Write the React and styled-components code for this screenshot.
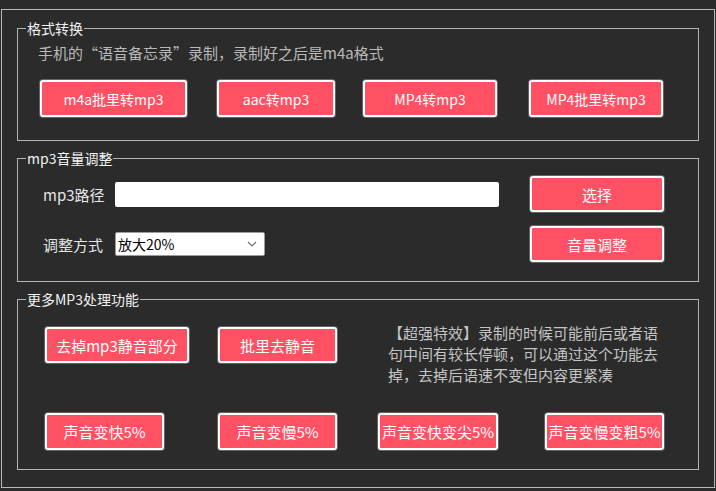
import React from "react";
import styled, { createGlobalStyle } from "styled-components";

const Global = createGlobalStyle`
  html, body { margin: 0; padding: 0; background: #2b2b2b; }
  body { font-family: "Noto Sans CJK SC", "Noto Sans", sans-serif; }
  * { box-sizing: border-box; }
`;

const Frame = styled.div`
  margin: 9px 0 0 1px;
  width: 714px;
  height: 479px;
  border: 1px solid #b9b9b9;
  padding: 10px 15px 0 15px;
  display: flex;
  flex-direction: column;
  gap: 9px;
`;

const Group = styled.fieldset`
  margin: 0;
  padding: 0;
  min-width: 0;
  border: 1px solid #b4b4b4;
  height: ${(p) => p.$h}px;
`;

const Legend = styled.legend`
  margin-left: 8px;
  padding: 0 1px;
  font-size: 14px;
  line-height: 16px;
  color: #f2f2f2;
`;

const Note = styled.div`
  margin: 7px 0 0 20px;
  font-size: 15px;
  line-height: 20px;
  color: #b9b9b9;
`;

const Btn = styled.button`
  width: ${(p) => p.$w}px;
  height: ${(p) => p.$h || 36}px;
  margin-top: ${(p) => p.$mt || 0}px;
  background: #ff5163;
  border: 2px solid #ffffff;
  border-radius: 3px;
  box-shadow: 0 0 0 1px rgba(200, 200, 200, 0.35);
  color: #ffffff;
  font-family: "Noto Sans CJK SC", "Noto Sans", sans-serif;
  font-size: ${(p) => p.$fs || 15}px;
  padding: 0;
  white-space: nowrap;
  cursor: pointer;
`;

const ConvertRow = styled.div`
  margin: 17px 0 0 22px;
  display: grid;
  grid-template-columns: 177px 146px 166px 134px;
  align-items: start;
`;

const VolumeGrid = styled.div`
  margin: 10px 0 0 25px;
  display: grid;
  grid-template-columns: 72px 415px 134px;
  grid-auto-rows: 36px;
  row-gap: 14px;
  align-items: center;
`;

const Label = styled.span`
  font-size: 15px;
  color: #e6e6e6;
  white-space: nowrap;
`;

const PathInput = styled.input`
  width: 384px;
  height: 25px;
  border: none;
  border-radius: 2px;
  background: #ffffff;
  outline: none;
`;

const Select = styled.div`
  width: 150px;
  height: 24px;
  background: #ffffff;
  border: 1px solid #9c9c9c;
  border-radius: 2px;
  display: flex;
  align-items: center;
  justify-content: space-between;
  padding: 0 7px 0 2px;
  font-size: 14px;
  color: #000;
`;

const MoreGrid = styled.div`
  margin: 15px 0 0 27px;
  display: grid;
  grid-template-columns: 173px 160px 167px 140px;
  row-gap: 28px;
  align-items: start;
`;

const Desc = styled.p`
  grid-column: 3 / span 2;
  margin: 0 0 0 10px;
  width: 275px;
  font-size: 15px;
  line-height: 21px;
  color: #c4c4c4;
`;

const Chevron = () => (
  <svg width="10" height="6" viewBox="0 0 10 6">
    <path d="M1 1 L5 5 L9 1" fill="none" stroke="#6f6f6f" strokeWidth="1.2" />
  </svg>
);

export default function App() {
  return (
    <>
      <Global />
      <Frame>
        <Group $h={121}>
          <Legend>格式转换</Legend>
          <Note>手机的“语音备忘录”录制，录制好之后是m4a格式</Note>
          <ConvertRow>
            <Btn $w={147} $h={37} $fs={14}>m4a批里转mp3</Btn>
            <Btn $w={118} $h={37} $fs={14}>aac转mp3</Btn>
            <Btn $w={134} $h={37} $fs={14}>MP4转mp3</Btn>
            <Btn $w={134} $h={37} $fs={14}>MP4批里转mp3</Btn>
          </ConvertRow>
        </Group>
        <Group $h={132}>
          <Legend>mp3音量调整</Legend>
          <VolumeGrid>
            <Label>mp3路径</Label>
            <PathInput />
            <Btn $w={134}>选择</Btn>
            <Label>调整方式</Label>
            <Select>
              <span>放大20%</span>
              <Chevron />
            </Select>
            <Btn $w={134}>音量调整</Btn>
          </VolumeGrid>
        </Group>
        <Group $h={179}>
          <Legend>更多MP3处理功能</Legend>
          <MoreGrid>
            <Btn $w={144} $mt={5}>去掉mp3静音部分</Btn>
            <Btn $w={119} $mt={5}>批里去静音</Btn>
            <Desc>【超强特效】录制的时候可能前后或者语句中间有较长停顿，可以通过这个功能去掉，去掉后语速不变但内容更紧凑</Desc>
            <Btn $w={119} $h={37}>声音变快5%</Btn>
            <Btn $w={119} $h={37}>声音变慢5%</Btn>
            <Btn $w={120} $h={37}>声音变快变尖5%</Btn>
            <Btn $w={119} $h={37}>声音变慢变粗5%</Btn>
          </MoreGrid>
        </Group>
      </Frame>
    </>
  );
}
